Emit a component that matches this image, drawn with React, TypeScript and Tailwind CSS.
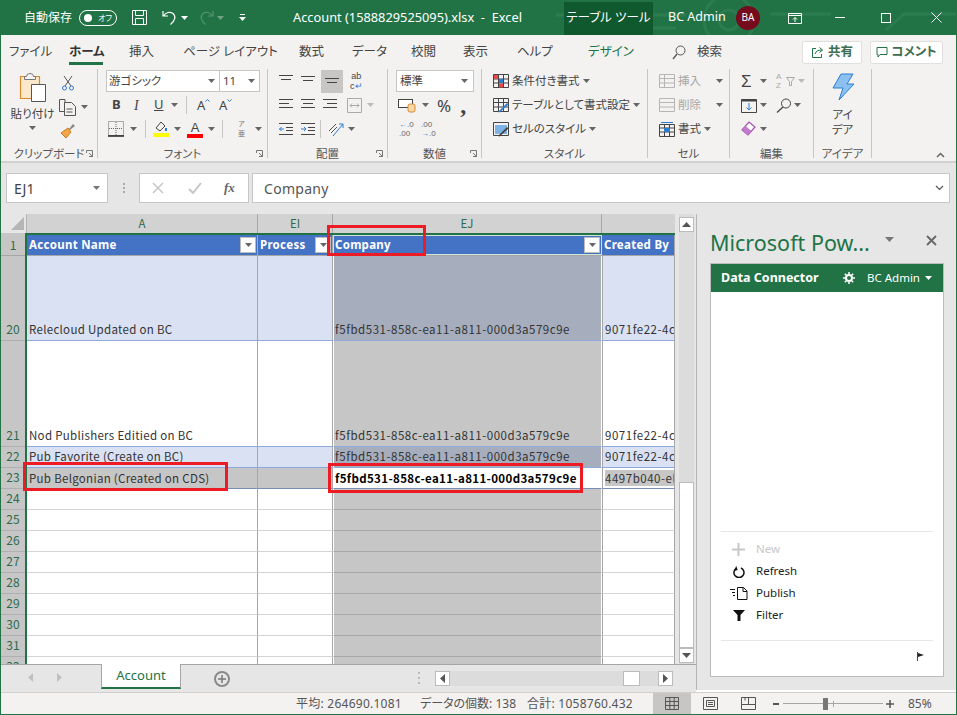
import React from "react";

const CJK = "font-['Noto_Sans','Noto_Sans_CJK_JP',sans-serif] [font-feature-settings:'palt']";

function Caret({ color = "#666666", className = "" }: { color?: string; className?: string }) {
  return (
    <svg width="7" height="4" viewBox="0 0 7 4" className={className}>
      <path d="M0 0h7L3.5 4z" fill={color} />
    </svg>
  );
}

// icon helper: crisp strokes on a pixel viewbox
function Ico({ w = 16, h = 16, children }: { w?: number; h?: number; children: React.ReactNode }) {
  return (
    <svg width={w} height={h} viewBox={`0 0 ${w} ${h}`} fill="none" className="shrink-0">
      {children}
    </svg>
  );
}

function AlignIcon({ rows }: { rows: [number, number][] }) {
  return (
    <Ico w={16} h={14}>
      {rows.map(([x, w], i) => (
        <rect key={i} x={x} y={1 + i * 4} width={w} height="1" fill="#444444" />
      ))}
    </Ico>
  );
}

function Tab({ label, className = "" }: { label: string; className?: string }) {
  return <span className={`whitespace-nowrap ${className}`}>{label}</span>;
}

function TitleBar() {
  return (
    <div className="relative flex h-[35px] shrink-0 items-center overflow-hidden bg-[#217346] text-white">
      <svg width="400" height="35" viewBox="0 0 400 35" fill="none" stroke="#2c7c50" strokeWidth="3" className="absolute right-0 top-0">
        <circle cx="173" cy="20" r="25" />
        <circle cx="173" cy="20" r="10" />
        <path d="M0 15h130M215 14h60M330 30l18-16h52M60 28h60" />
      </svg>
      <span className="relative ml-[23px] text-[12px]">自動保存</span>
      <div className="relative ml-[7px] flex h-[16px] w-[38px] items-center rounded-full border border-white pl-[4px]">
        <span className="h-[8px] w-[8px] rounded-full bg-white" />
        <span className="ml-[6px] text-[8px] leading-none">オフ</span>
      </div>
      <div className="relative ml-[14px]">
        <Ico w={17} h={17}>
          <path d="M1.5 1.5h14v14h-14zM4.5 1.5v5h8v-5M4.5 15.5v-6h8v6" stroke="#fff" />
        </Ico>
      </div>
      <div className="relative ml-[13px]">
        <Ico w={17} h={17}>
          <path d="M2 2v5h5M2.5 7C5 3 9 2.500 12 4.500c3 2.500 2.500 7-2.500 11" stroke="#fff" strokeWidth="1.200" />
        </Ico>
      </div>
      <Caret color="#ffffff" className="relative ml-[3px]" />
      <div className="relative ml-[10px] opacity-40 [transform:scaleX(-1)]">
        <Ico w={17} h={17}>
          <path d="M2 2v5h5M2.500 7C5 3 9 2.500 12 4.500c3 2.500 2.500 7-2.500 11" stroke="#9cc3ad" strokeWidth="1.200" />
        </Ico>
      </div>
      <Caret color="#6fa386" className="relative ml-[2px]" />
      <div className="relative ml-[15px] flex flex-col items-center gap-[2px]">
        <span className="h-px w-[5px] bg-white" />
        <Caret color="#ffffff" />
      </div>
      <span className="relative ml-[47px] w-[271px] whitespace-pre text-[12.8px]">Account (1588829525095).xlsx  -  Excel</span>
      <div className="relative mt-[2px] flex h-[33px] w-[89px] items-center justify-center bg-[#10592f] text-[12.5px]">テーブル ツール</div>
      <span className="relative ml-[15px] w-[68px] text-[12.5px]">BC Admin</span>
      <div className="relative flex h-[24px] w-[24px] items-center justify-center rounded-full bg-[#750b1c] text-[10px]">BA</div>
      <div className="relative ml-[28px]">
        <Ico w={14} h={12}>
          <path d="M.5 1.500h13v10H.5zM.5 3.500h13M7 10V5.500M5 7.500l2-2 2 2" stroke="#fff" />
        </Ico>
      </div>
      <span className="relative ml-[33px] h-px w-[10px] bg-white" />
      <span className="relative ml-[36px] h-[10px] w-[10px] border border-white" />
      <div className="relative ml-[40px]">
        <Ico w={11} h={11}>
          <path d="M.5.500l10 10M10.500.500l-10 10" stroke="#fff" />
        </Ico>
      </div>
    </div>
  );
}

function TabRow() {
  return (
    <div className="flex h-[34px] shrink-0 items-center bg-[#f3f2f1] text-[12.5px] text-[#444444]">
      <Tab label="ファイル" className="ml-[8px] w-[60px]" />
      <div className="relative w-[60px]">
        <span className="font-bold text-[#333333]">ホーム</span>
        <span className="absolute left-0 top-[19px] h-[3px] w-[34px] bg-[#217346]" />
      </div>
      <Tab label="挿入" className="w-[54px]" />
      <Tab label="ページ レイアウト" className="w-[116px]" />
      <Tab label="数式" className="w-[53px]" />
      <Tab label="データ" className="w-[59px]" />
      <Tab label="校閲" className="w-[52px]" />
      <Tab label="表示" className="w-[54px]" />
      <Tab label="ヘルプ" className="w-[71px]" />
      <Tab label="デザイン" className="w-[84px] text-[#217346]" />
      <div className="w-[25px]">
        <Ico w={14} h={15}>
          <circle cx="8.500" cy="5.500" r="4.500" stroke="#555" />
          <path d="M5 9l-4 5" stroke="#555" strokeWidth="1.300" />
        </Ico>
      </div>
      <Tab label="検索" className="w-[105px]" />
      <div className="flex h-[23px] w-[60px] items-center justify-center gap-[4px] rounded-[2px] border border-[#e1dfdd] bg-white font-bold text-[#217346]">
        <Ico w={13} h={13}>
          <path d="M5 2.500H1.500v9h9V8M4 8c1-3 3-4 7-4M8.500 1.500L11.500 4 8.500 6.500" stroke="#217346" />
        </Ico>
        <span className="text-[#3f6d52]">共有</span>
      </div>
      <div className="ml-[8px] flex h-[23px] w-[73px] items-center justify-center gap-[3px] rounded-[2px] border border-[#e1dfdd] bg-white font-bold">
        <Ico w={12} h={12}>
          <path d="M1 1.500h10v7H4L2 11V8.500H1z" stroke="#217346" />
        </Ico>
        <span className="text-[#3f6d52]">コメント</span>
      </div>
    </div>
  );
}

function Group({ width, label, children }: { width: number; label: string; children: React.ReactNode }) {
  return (
    <div className="relative flex h-[89px] shrink-0 flex-col border-r border-[#c8c6c4]" style={{ width }}>
      <div className="min-h-0 flex-1">{children}</div>
      <div className="-mb-[4px] pb-[1px] text-center text-[11.5px] leading-[15px] text-[#555555]">{label}</div>
    </div>
  );
}

function Launcher() {
  return (
    <svg width="7" height="7" viewBox="0 0 7 7" fill="none" className="absolute bottom-[1px] right-[4px]">
      <path d="M.5 3V.500H6.500V6.500H3M3 3l3 3M4 6.500h2.500V4" stroke="#777" />
    </svg>
  );
}

function Row({ className = "", children }: { className?: string; children: React.ReactNode }) {
  return <div className={`flex h-[24px] items-center ${className}`}>{children}</div>;
}

function Sep() {
  return <span className="h-[18px] w-px bg-[#c8c6c4]" />;
}

function GrowA({ down }: { down?: boolean }) {
  return (
    <span className="flex w-[22px] items-start">
      <span className="text-[13px] leading-[16px]">A</span>
      <svg width="5" height="3" viewBox="0 0 5 3" fill="none" className="mt-[2px]">
        <path d={down ? "M.5.500l2 2 2-2" : "M.5 2.500l2-2 2 2"} stroke="#2b7cd3" />
      </svg>
    </span>
  );
}

function Ribbon() {
  return (
    <div className="flex h-[94px] shrink-0 border-b-2 border-[#d2d0ce] bg-[#f3f2f1] pb-[3px] text-[#444444]">
      <Group width={97} label="クリップボード">
        <Launcher />
        <div className="flex">
          <div className="ml-[10px] flex w-[43px] flex-col items-center pt-[4px]">
            <Ico w={28} h={30}>
              <path d="M1.500 3.500h19v22h-19z" fill="#fbe7c9" stroke="#d98a2b" strokeWidth="1.200" />
              <path d="M7.500 3.500a3.500 3 0 017 0h2v3h-11v-3z" fill="#f5f5f5" stroke="#777" />
              <path d="M12.500 11.500h14v17h-14z" fill="#fff" stroke="#555" />
            </Ico>
            <span className="mt-[3px] whitespace-nowrap text-[11.5px] leading-[16px]">貼り付け</span>
            <Caret className="mt-[4px]" />
          </div>
          <div className="ml-[5px] flex flex-col">
            <Row className="h-[23px] pl-[3px] pt-[4px]">
              <Ico w={12} h={16}>
                <path d="M2 1l7 10M10 1L3 11" stroke="#555" />
                <circle cx="2.500" cy="13" r="2" stroke="#2b7cd3" />
                <circle cx="9.500" cy="13" r="2" stroke="#2b7cd3" />
              </Ico>
            </Row>
            <Row className="h-[24px] pt-[4px]">
              <Ico w={18} h={17}>
                <path d="M6 3.500V.500H.500v12H5M5.500 3.500h7l4 4v9h-11zM7.500 10h6M7.500 13h6" stroke="#555" />
              </Ico>
              <Caret className="ml-[4px]" />
            </Row>
            <Row className="h-[24px] pl-[1px] pt-[4px]">
              <Ico w={16} h={16}>
                <path d="M9 6l4-5 2 2-5 4z" fill="#888" />
                <path d="M8 5l3 4-5 6-5-5z" fill="#f3a444" stroke="#c8791e" />
              </Ico>
            </Row>
          </div>
        </div>
      </Group>

      <Group width={170} label="フォント">
        <Launcher />
        <div className="flex h-[23px] pl-[8px] pt-[1px]">
          <div className="flex h-[22px] w-[114px] items-center justify-between border border-[#c8c6c4] bg-white px-[2px] text-[11.5px]">
            <span>游ゴシック</span>
            <Caret className="mr-[2px]" />
          </div>
          <div className="flex h-[22px] w-[40px] items-center justify-between border border-l-0 border-[#c8c6c4] bg-white pl-[3px] pr-[4px] text-[11.5px]">
            <span>11</span>
            <Caret />
          </div>
        </div>
        <Row className="mt-[1px] pl-[14px]">
          <span className="w-[22px] text-[13px] font-bold">B</span>
          <span className="w-[20px] font-['Liberation_Serif',serif] text-[14px] italic">I</span>
          <span className="w-[17px] text-[13px] underline">U</span>
          <Caret />
          <span className="ml-[8px] flex"><Sep /></span>
          <span className="ml-[10px] flex"><GrowA /><GrowA down /></span>
        </Row>
        <Row className="pl-[10px]">
          <Ico w={16} h={16}>
            <path d="M.500.500h15v14H.500z" stroke="#666" strokeDasharray="1 1" />
            <path d="M8 1v13M1 7.500h14" stroke="#666" strokeDasharray="1 1" />
            <path d="M0 15h16" stroke="#222" strokeWidth="1.500" />
          </Ico>
          <Caret className="ml-[6px]" />
          <span className="ml-[8px] flex"><Sep /></span>
          <div className="ml-[7px] flex flex-col items-center">
            <Ico w={16} h={12}>
              <path d="M3 7l5-6 4 4-5 5z" stroke="#444" />
              <path d="M13 7v3" stroke="#2b7cd3" strokeWidth="2" />
            </Ico>
            <span className="h-[4px] w-[16px] bg-[#ffff00]" />
          </div>
          <Caret className="ml-[5px]" />
          <div className="ml-[6px] flex flex-col items-center">
            <span className="font-['Liberation_Sans',sans-serif] text-[13px] leading-[13px]">A</span>
            <span className="h-[4px] w-[16px] bg-[#ff0000]" />
          </div>
          <Caret className="ml-[5px]" />
          <span className="ml-[7px] flex"><Sep /></span>
          <span className="ml-[11px] w-[15px] text-center text-[7px] leading-[10px] text-[#777]">ア<br />亜</span>
          <Caret className="ml-[6px]" />
        </Row>
      </Group>

      <Group width={120} label="配置">
        <Launcher />
        <div className="flex h-[24px] items-center pl-[10px]">
          <span className="w-[22px]"><AlignIcon rows={[[1, 14], [3, 10]]} /></span>
          <span className="w-[22px]"><div className="pt-[2px]"><AlignIcon rows={[[1, 14], [3, 10]]} /></div></span>
          <span className="-ml-[1px] flex h-[23px] w-[22px] items-center justify-center bg-[#c8c6c4]"><div className="pt-[5px]"><AlignIcon rows={[[1, 14], [3, 10]]} /></div></span>
          <span className="ml-[7px] text-center font-['Liberation_Sans',sans-serif] text-[9px] leading-[10px] text-[#444]">ab<br />c<span className="text-[#2b7cd3]">↵</span></span>
        </div>
        <Row className="pl-[10px]">
          <span className="w-[22px]"><AlignIcon rows={[[1, 14], [1, 10], [1, 14]]} /></span>
          <span className="w-[22px]"><AlignIcon rows={[[1, 14], [3, 10], [1, 14]]} /></span>
          <span className="w-[22px]"><AlignIcon rows={[[1, 14], [5, 10], [1, 14]]} /></span>
          <span className="ml-[3px]">
            <Ico w={15} h={15}>
              <path d="M.500.500h14v14H.500z" stroke="#aaa" />
              <path d="M3 7.500h9M3 7.500l2-2M3 7.500l2 2M12 7.500l-2-2M12 7.500l-2 2" stroke="#aaa" />
            </Ico>
          </span>
          <Caret color="#bbbbbb" className="ml-[5px]" />
        </Row>
        <Row className="pl-[10px]">
          <span className="w-[22px]">
            <Ico w={16} h={14}>
              <path d="M1 1.500h14M8 5.500h7M8 8.500h7M1 12.500h14" stroke="#444" />
              <path d="M6 7H1.500M3.500 5L1.500 7l2 2" stroke="#2b7cd3" />
            </Ico>
          </span>
          <span className="w-[20px]">
            <Ico w={16} h={14}>
              <path d="M1 1.500h14M8 5.500h7M8 8.500h7M1 12.500h14" stroke="#444" />
              <path d="M1 7h5M4 5l2 2-2 2" stroke="#2b7cd3" />
            </Ico>
          </span>
          <Sep />
          <span className="ml-[7px]">
            <Ico w={17} h={15}>
              <path d="M1 9l7-7M3 11l6-6" stroke="#555" />
              <path d="M5 14L15 2M11 2h4v4" stroke="#2b7cd3" />
            </Ico>
          </span>
          <Caret className="ml-[3px]" />
        </Row>
      </Group>

      <Group width={94} label="数値">
        <Launcher />
        <div className="flex h-[24px] pl-[8px] pt-[1px]">
          <div className="flex h-[22px] w-[78px] items-center justify-between border border-[#c8c6c4] bg-white px-[3px] text-[11.5px]">
            <span>標準</span>
            <Caret className="mr-[2px]" />
          </div>
        </div>
        <Row className="pl-[10px]">
          <Ico w={18} h={16}>
            <rect x=".5" y="2.500" width="14" height="8" fill="#fff" stroke="#444" />
            <rect x="10" y="7" width="7" height="8" rx="2" fill="#f9d9a8" stroke="#d98a2b" />
          </Ico>
          <Caret className="ml-[6px]" />
          <span className="ml-[8px] text-[17px] leading-none">%</span>
          <span className="ml-[9px] font-['Liberation_Serif',serif] text-[24px] font-bold leading-[14px]">,</span>
        </Row>
        <Row className="pl-[11px] font-['Liberation_Sans',sans-serif] text-[8px] leading-[9.5px] text-[#666]">
          <span className="w-[22px]"><span className="text-[#2b7cd3]">←</span>.0<br />.00</span>
          <span>.00<br /><span className="text-[#2b7cd3]">→</span>.0</span>
        </Row>
      </Group>

      <Group width={166} label="スタイル">
        <div className="flex flex-col pl-[11px] text-[11.5px]">
          <Row>
            <Ico w={16} h={15}>
              <path d="M.500.500h15v13H.500zM5.500.500v13M10.500.500v13M.500 5h15M.500 9h15" stroke="#444" />
              <rect x="1" y="1" width="4" height="4" fill="#e8474b" />
              <rect x="6" y="5" width="4" height="4" fill="#2b7cd3" />
              <rect x="6" y="9.500" width="4" height="4" fill="#e8474b" />
            </Ico>
            <span className="ml-[3px] whitespace-nowrap">条件付き書式</span>
            <Caret className="ml-[3px]" />
          </Row>
          <Row>
            <Ico w={16} h={15}>
              <path d="M.500.500h15v13H.500zM.500 4.500h15M5.500.500v13M10.500.500v13M.500 9h15" stroke="#444" />
              <path d="M5 14l9-9 1.500 1.500-9 8z" fill="#2b7cd3" />
            </Ico>
            <span className="ml-[3px] whitespace-nowrap">テーブルとして書式設定</span>
            <Caret className="ml-[3px]" />
          </Row>
          <Row>
            <Ico w={16} h={15}>
              <path d="M.500.500h15v13H.500z" stroke="#444" />
              <rect x="2" y="3" width="12" height="9" fill="#7fb2e5" />
              <path d="M5 14l9-9 1.500 1.500-9 8z" fill="#444" />
            </Ico>
            <span className="ml-[3px] whitespace-nowrap">セルのスタイル</span>
            <Caret className="ml-[3px]" />
          </Row>
        </div>
      </Group>

      <Group width={82} label="セル">
        <div className="flex flex-col pl-[11px] text-[11.5px]">
          <Row className="text-[#a6a6a6]">
            <Ico w={16} h={14}>
              <path d="M.500.500h15v13H.500zM5.500.500v13M.500 4.500h15M.500 9h15" stroke="#b5b5b5" />
            </Ico>
            <span className="ml-[3px] w-[38px]">挿入</span>
            <Caret />
          </Row>
          <Row className="text-[#a6a6a6]">
            <Ico w={16} h={14}>
              <path d="M.500.500h15v13H.500zM.500 4.500h15M.500 9h15" stroke="#b5b5b5" />
            </Ico>
            <span className="ml-[3px] w-[38px]">削除</span>
            <Caret />
          </Row>
          <Row>
            <Ico w={16} h={15}>
              <path d="M.500 2.500h15v12H.500zM.500 6h15M.500 10h15M5.500 2.500v12M10.500 2.500v12" stroke="#444" />
              <rect x="5" y="6" width="6" height="4" fill="#2b7cd3" />
              <path d="M2 .500h12" stroke="#2b7cd3" />
            </Ico>
            <span className="ml-[3px] mr-[3px]">書式</span>
            <Caret />
          </Row>
        </div>
      </Group>

      <Group width={84} label="編集">
        <div className="flex flex-col pl-[11px]">
          <Row>
            <span className="w-[15px] font-['Liberation_Sans',sans-serif] text-[17px] leading-none">Σ</span>
            <Caret className="ml-[4px]" />
            <span className="ml-[9px] w-[10px] font-['Liberation_Sans',sans-serif] text-[8px] leading-[9px] text-[#aaa]">A<br />Z</span>
            <Ico w={9} h={9}>
              <path d="M.500.500h8L5.500 4.500v4h-2v-4z" stroke="#aaa" />
            </Ico>
            <Caret color="#bbbbbb" className="ml-[3px]" />
          </Row>
          <Row>
            <Ico w={16} h={15}>
              <path d="M.500 1.500h15v13H.500z" stroke="#444" />
              <path d="M.500 1.500h15v2H.500z" fill="#444" />
              <path d="M8 5v7M5.500 9.500L8 12l2.500-2.500" stroke="#2b7cd3" />
            </Ico>
            <Caret className="ml-[3px]" />
            <span className="ml-[9px]">
              <Ico w={16} h={15}>
                <circle cx="10" cy="5.500" r="4.500" stroke="#444" />
                <path d="M7 9l-6 5.500" stroke="#444" strokeWidth="1.300" />
              </Ico>
            </span>
            <Caret className="ml-[2px]" />
          </Row>
          <Row>
            <Ico w={16} h={16}>
              <path d="M1 9l7-8 6 5-7 8z" fill="#fff" stroke="#a24bb0" strokeWidth="1.200" />
              <path d="M1 9l3.500-4 6 5-3.500 4z" fill="#c27bce" />
            </Ico>
            <Caret className="ml-[3px]" />
          </Row>
        </div>
      </Group>

      <Group width={58} label="アイデア">
        <div className="flex flex-col items-center pt-[4px]">
          <Ico w={22} h={28}>
            <path d="M9 1h12l-6 10h7L7 27l4-12H1z" fill="#8cc0f0" stroke="#2b7cd3" />
          </Ico>
          <span className="mt-[6px] text-center text-[11.5px] leading-[15px]">アイ<br />デア</span>
        </div>
      </Group>

      <div className="flex flex-1 items-end justify-end pr-[11px]">
        <svg width="9" height="6" viewBox="0 0 9 6" fill="none">
          <path d="M1 5l3.500-3.500L8 5" stroke="#666" strokeWidth="1.500" />
        </svg>
      </div>
    </div>
  );
}

function FormulaBar() {
  return (
    <div className="flex h-[51px] shrink-0 items-start bg-[#e6e6e6] pl-[5px] pr-[6px] pt-[10px]">
      <div className="flex h-[30px] w-[102px] items-center justify-between border border-[#c8c6c4] bg-white pl-[7px] pr-[7px] text-[14px] text-[#444]">
        <span>EJ1</span>
        <Caret color="#777777" />
      </div>
      <div className="flex h-[30px] w-[31px] flex-col items-center justify-center gap-[2px]">
        <span className="h-[2px] w-[2px] bg-[#aaa]" />
        <span className="h-[2px] w-[2px] bg-[#aaa]" />
        <span className="h-[2px] w-[2px] bg-[#aaa]" />
      </div>
      <div className="flex h-[30px] w-[110px] items-center border border-[#c8c6c4] bg-white pl-[12px]">
        <Ico w={12} h={12}>
          <path d="M1 1l10 10M11 1L1 11" stroke="#c8c6c4" strokeWidth="1.500" />
        </Ico>
        <span className="ml-[24px]">
          <Ico w={14} h={12}>
            <path d="M1 7l4 4 8-10" stroke="#c8c6c4" strokeWidth="2" />
          </Ico>
        </span>
        <span className="ml-[22px] font-['Liberation_Serif',serif] text-[13px] font-bold italic text-[#666]">fx</span>
      </div>
      <div className="ml-[3px] flex h-[30px] flex-1 items-center justify-between border border-[#c8c6c4] bg-white pl-[11px] pr-[5px] text-[14px] text-[#555]">
        <span className="tracking-[0.3px]">Company</span>
        <svg width="9" height="6" viewBox="0 0 9 6" fill="none">
          <path d="M1 1l3.500 3.500L8 1" stroke="#555" strokeWidth="1.200" />
        </svg>
      </div>
    </div>
  );
}

type RowData = { n: number; h: number; a?: string; co?: string; cr?: string; kind: "band" | "plain" | "sel" | "empty" };

const rows: RowData[] = [
  { n: 20, h: 85, kind: "band", a: "Relecloud Updated on BC", co: "f5fbd531-858c-ea11-a811-000d3a579c9e", cr: "9071fe22-4c" },
  { n: 21, h: 106, kind: "plain", a: "Nod Publishers Editied on BC", co: "f5fbd531-858c-ea11-a811-000d3a579c9e", cr: "9071fe22-4c" },
  { n: 22, h: 21, kind: "band", a: "Pub Favorite (Create on BC)", co: "f5fbd531-858c-ea11-a811-000d3a579c9e", cr: "9071fe22-4c" },
  { n: 23, h: 21, kind: "sel", a: "Pub Belgonian (Created on CDS)", co: "f5fbd531-858c-ea11-a811-000d3a579c9e", cr: "4497b040-el" },
  ...[24, 25, 26, 27, 28, 29, 30, 31, 32].map((n) => ({ n, h: 21, kind: "empty" as const })),
];

const cellText = "overflow-hidden whitespace-nowrap pl-[2px] pb-[3px] font-['Noto_Sans_CJK_JP',sans-serif] text-[11.5px] leading-[16px] text-[#333]";

function FilterBtn() {
  return (
    <span className="ml-auto mr-[1px] flex h-[16px] w-[16px] shrink-0 items-center justify-center border border-[#bbb] bg-white">
      <Caret color="#666666" />
    </span>
  );
}

function HeaderCell({ width, label, filter, active, border }: { width: string; label: string; filter?: boolean; active?: boolean; border: string }) {
  return (
    <div className={`flex h-full items-center overflow-hidden border-r bg-[#4472c4] ${width} ${border} ${active ? "outline outline-1 -outline-offset-1 outline-[#cfe3d6]" : ""}`}>
      <span className="whitespace-nowrap pl-[2px] font-['Noto_Sans',sans-serif] text-[11.5px] font-bold tracking-[0.28px] text-white">{label}</span>
      {filter && <FilterBtn />}
    </div>
  );
}

function DataRow({ r }: { r: RowData }) {
  const band = r.kind === "band";
  const sel = r.kind === "sel";
  const aBg = sel ? "bg-[#c6c6c6]" : band ? "bg-[#d9e1f2]" : "bg-white";
  const ejBg = sel ? "bg-white" : band ? "bg-[#a6adbd]" : "bg-[#c6c6c6]";
  const line = r.kind === "empty" ? "border-b-[#d4d4d4]" : sel ? "border-b-[#7a8db5]" : "border-b-[#8ea9db]";
  const ejLine = r.kind === "empty" ? "border-b-[#a8a8a8]" : sel ? "border-b-[#7a8db5]" : "border-b-[#8ea9db]";
  return (
    <div className="flex shrink-0" style={{ height: r.h }}>
      <div className={`flex w-[231px] items-end border-b border-r border-r-[#a6a6a6] ${aBg} ${line}`}>
        {r.a && <span className={`${cellText} tracking-[0.3px] ${sel ? "!pb-[2px]" : ""}`}>{r.a}</span>}
      </div>
      <div className={`w-[75px] border-b border-r border-r-[#a6a6a6] ${aBg} ${line}`} />
      <div className={`flex w-[269px] items-end border-b border-r border-l border-l-white border-r-white ${ejBg} ${ejLine}`}>
        {r.co && (
          <span className={`${cellText} !pl-[1px] ${sel ? "!pb-[2px] font-bold tracking-[0.36px] text-black" : "tracking-[0.53px]"}`}>{r.co}</span>
        )}
      </div>
      <div className={`flex flex-1 items-end overflow-hidden border-b border-r border-l border-l-[#a6a6a6] border-r-[#a6a6a6] ${band ? "bg-[#d9e1f2]" : "bg-white"} ${line}`}>
        {r.cr && (
          <span className={`${cellText} min-w-0 tracking-[0.53px] ${sel ? "!pb-[2px]" : ""}`}>
            <span className={sel ? "bg-[#c6c6c6]" : ""}>{r.cr}</span>
          </span>
        )}
      </div>
    </div>
  );
}

function ScrollArrow({ dir }: { dir: "up" | "down" | "left" | "right" }) {
  const d = { up: "M0 5L4.500 0 9 5z", down: "M0 0h9L4.500 5z", left: "M5 0v9L0 4.500z", right: "M0 0v9l5-4.500z" }[dir];
  const vertical = dir === "up" || dir === "down";
  return (
    <svg width={vertical ? 9 : 5} height={vertical ? 5 : 9} viewBox={vertical ? "0 0 9 5" : "0 0 5 9"}>
      <path d={d} fill="#555" />
    </svg>
  );
}

function Sheet() {
  return (
    <div className="relative flex h-[450px] shrink-0 overflow-hidden bg-[#e6e6e6]">
      <div className="flex w-[674px] shrink-0 flex-col overflow-hidden">
        {/* column letters */}
        <div className="flex h-[19px] shrink-0 bg-[#d2d2d2] text-center font-['Noto_Sans_CJK_JP',sans-serif] text-[11.5px] leading-[18px] text-[#2d6a4a]">
          <div className="flex w-[26px] items-end justify-end border-r border-[#b5b5b5] bg-[#e6e6e6] pb-[3px] pr-[2px]">
            <svg width="13" height="13" viewBox="0 0 13 13"><path d="M13 0v13H0z" fill="#b5b5b5" /></svg>
          </div>
          <div className="w-[231px] border-r border-[#a6a6a6]">A</div>
          <div className="w-[75px] border-r border-[#a6a6a6]">EI</div>
          <div className="w-[269px] border-r border-[#a6a6a6]">EJ</div>
          <div className="flex-1" />
        </div>
        <div className="flex min-h-0 flex-1">
          {/* row numbers */}
          <div className="flex w-[24px] shrink-0 flex-col bg-[#c6c6c6] pt-[2px] text-center font-['Noto_Sans_CJK_JP',sans-serif] text-[12px] text-[#2d6a4a]">
            <div className="flex h-[21px] shrink-0 items-end justify-center border-b border-[#a6a6a6] pb-[1px] leading-[18px]">1</div>
            {rows.map((r) => (
              <div key={r.n} className="flex shrink-0 items-end justify-center border-b border-[#b0b0b0] pb-[2px] leading-[18px]" style={{ height: r.h }}>
                {r.n}
              </div>
            ))}
          </div>
          {/* cells */}
          <div className="min-w-0 flex-1 border-l-2 border-t-2 border-[#217346]">
            <div className="flex h-[21px] shrink-0 border-b border-b-[#a6a6a6]">
              <HeaderCell width="w-[231px]" label="Account Name" filter border="border-r-[#a6a6a6]" />
              <HeaderCell width="w-[75px]" label="Process" filter border="border-r-[#a6a6a6]" />
              <HeaderCell width="w-[269px]" label="Company" filter active border="border-r-white" />
              <div className="flex-1"><HeaderCell width="w-full" label="Created By" border="border-r-[#a6a6a6]" /></div>
            </div>
            {rows.map((r) => (
              <DataRow key={r.n} r={r} />
            ))}
          </div>
        </div>
      </div>

      {/* vertical scrollbar */}
      <div className="ml-[4px] flex w-[15px] shrink-0 flex-col bg-[#dcdcdc]">
        <div className="mt-[3px] flex h-[15px] items-center justify-center border border-[#bbb] bg-white"><ScrollArrow dir="up" /></div>
        <div className="h-[250px]" />
        <div className="h-[166px] border border-[#bbb] bg-white" />
        <div className="flex h-[15px] items-center justify-center border border-[#bbb] bg-white"><ScrollArrow dir="down" /></div>
      </div>

      {/* red annotation boxes */}
      <div className="pointer-events-none absolute left-[326px] top-[11px] h-[31px] w-[99px] border-[3px] border-[#ed1c24]" />
      <div className="pointer-events-none absolute left-[22px] top-[248px] h-[29px] w-[205px] border-[3px] border-[#ed1c24]" />
      <div className="pointer-events-none absolute left-[327px] top-[249px] h-[30px] w-[255px] border-[3px] border-[#ed1c24]" />
    </div>
  );
}

function SheetTabs() {
  return (
    <div className="flex h-[28px] shrink-0 items-start border-t border-[#a6a6a6] bg-[#e6e6e6]">
      <div className="flex h-[24px] w-[100px] items-center pl-[27px]">
        <svg width="5" height="9" viewBox="0 0 5 9"><path d="M5 0v9L0 4.500z" fill="#c0c0c0" /></svg>
        <svg width="5" height="9" viewBox="0 0 5 9" className="ml-[24px]"><path d="M0 0v9l5-4.500z" fill="#c0c0c0" /></svg>
      </div>
      <div className="-mt-px flex h-[25px] w-[80px] items-center justify-center border-x border-[#a6a6a6] border-b-2 border-b-[#217346] bg-white text-[13px] text-[#217346]">
        Account
      </div>
      <div className="ml-[33px] mt-[6px] flex h-[16px] w-[16px] items-center justify-center rounded-full border-2 border-[#8a8a8a]">
        <svg width="8" height="8" viewBox="0 0 8 8"><path d="M4 0v8M0 4h8" stroke="#777" strokeWidth="1.500" /></svg>
      </div>
      <div className="ml-[188px] mt-[7px] flex flex-col gap-[3px]">
        <span className="h-[2px] w-[2px] bg-[#bbb]" />
        <span className="h-[2px] w-[2px] bg-[#bbb]" />
        <span className="h-[2px] w-[2px] bg-[#bbb]" />
      </div>
      <div className="ml-[15px] mt-[6px] flex h-[15px] w-[238px] items-center bg-[#dcdcdc]">
        <span className="flex h-[15px] w-[15px] items-center justify-center border border-[#bbb] bg-white"><ScrollArrow dir="left" /></span>
        <span className="ml-[173px] h-[15px] w-[17px] border border-[#bbb] bg-white" />
        <span className="ml-auto flex h-[15px] w-[15px] items-center justify-center border border-[#bbb] bg-white"><ScrollArrow dir="right" /></span>
      </div>
    </div>
  );
}

function PaneAction({ label, disabled, children }: { label: string; disabled?: boolean; children: React.ReactNode }) {
  return (
    <div className={`flex h-[22px] items-center text-[11.5px] ${disabled ? "text-[#c8c8c8]" : "text-[#222]"}`}>
      <span className="flex w-[35px] justify-center">{children}</span>
      <span>{label}</span>
    </div>
  );
}

function TaskPane() {
  return (
    <div className="flex h-[476px] w-[260px] shrink-0 flex-col border-l border-[#b5b5b5] bg-[#e6e6e6]">
      <div className="flex h-[49px] shrink-0 items-center pl-[13px] pt-[9px]">
        <span className="whitespace-nowrap text-[21.5px] leading-none text-[#217346]">Microsoft Pow...</span>
        <svg width="9" height="5" viewBox="0 0 9 5" className="ml-[15px] -mt-[7px]"><path d="M0 0h9L4.500 5z" fill="#777" /></svg>
        <span className="ml-[32px] -mt-[6px]">
          <Ico w={11} h={11}>
            <path d="M1 1l9 9M10 1l-9 9" stroke="#666" strokeWidth="1.800" />
          </Ico>
        </span>
      </div>
      <div className="ml-[13px] flex h-[414px] w-[234px] flex-col border border-[#bbb] bg-white">
        <div className="flex h-[28px] shrink-0 items-center bg-[#217346] pl-[10px] text-white">
          <span className="w-[122px] text-[12.5px] font-bold leading-none">Data Connector</span>
          <svg width="12" height="12" viewBox="0 0 12 12">
            <circle cx="6" cy="6" r="3" fill="none" stroke="#fff" strokeWidth="2" />
            <path d="M6 0v2M6 10v2M0 6h2M10 6h2M1.800 1.800l1.500 1.500M8.700 8.700l1.500 1.500M10.200 1.800L8.700 3.300M3.300 8.700l-1.500 1.500" stroke="#fff" strokeWidth="1.500" />
          </svg>
          <span className="ml-[12px] text-[11.5px]">BC Admin</span>
          <Caret color="#ffffff" className="ml-[5px]" />
        </div>
        <div className="mx-[10px] mt-[239px] border-t border-[#e6e6e6] pb-[6px]" />
        <div className="flex flex-col pl-[10px]">
          <PaneAction label="New" disabled>
            <svg width="13" height="13" viewBox="0 0 13 13"><path d="M6.500 0v13M0 6.500h13" stroke="#c8c8c8" strokeWidth="2" /></svg>
          </PaneAction>
          <PaneAction label="Refresh">
            <svg width="12" height="13" viewBox="0 0 12 13" fill="none">
              <path d="M3.500 3.200A5 5 0 1 0 8 3" stroke="#111" strokeWidth="1.500" />
              <path d="M4 .500v4.500h-3.500z" fill="#111" transform="rotate(-20 4 3)" />
            </svg>
          </PaneAction>
          <PaneAction label="Publish">
            <svg width="18" height="13" viewBox="0 0 18 13" fill="none">
              <path d="M7.500.500h6l3.500 3.500v8.500H7.500zM13 .500V4.500h4M0 2.500h5M2 5.500h3M3 8.500h2" stroke="#111" />
            </svg>
          </PaneAction>
          <PaneAction label="Filter">
            <svg width="12" height="11" viewBox="0 0 12 11"><path d="M0 0h12L7.500 5v6h-3V5z" fill="#111" /></svg>
          </PaneAction>
        </div>
        <div className="mx-[10px] mt-[14px] border-t border-[#e6e6e6]" />
        <div className="flex justify-end pr-[19px] pt-[11px]">
          <svg width="7" height="9" viewBox="0 0 7 9">
            <path d="M.500 0v9" stroke="#5c2d91" />
            <path d="M1 1l6 2-6 2z" fill="#222" />
          </svg>
        </div>
      </div>
    </div>
  );
}

function StatusBar() {
  return (
    <div className="flex h-[22px] shrink-0 items-center border-t border-[#d2d0ce] bg-[#f3f2f1] text-[12px] text-[#555]">
      <span className="ml-[295px] w-[124px] whitespace-nowrap tracking-[0.25px]">平均: 264690.1081</span>
      <span className="w-[107px] whitespace-nowrap">データの個数: 138</span>
      <span className="w-[126px] whitespace-nowrap tracking-[0.25px]">合計: 1058760.432</span>
      <span className="flex h-full w-[38px] items-center justify-center bg-[#c8c6c4]">
        <svg width="14" height="13" viewBox="0 0 14 13" fill="none">
          <path d="M.500.500h13v12H.500zM4.800.500v12M9.200.500v12M.500 4.500h13M.500 8.500h13" stroke="#555" />
        </svg>
      </span>
      <span className="ml-[12px]">
        <svg width="15" height="13" viewBox="0 0 15 13" fill="none">
          <path d="M.500.500h14v12H.500zM3.500 3.500h8v6h-8zM5 5.500h5M5 7.500h5" stroke="#555" />
        </svg>
      </span>
      <span className="ml-[23px]">
        <svg width="15" height="13" viewBox="0 0 15 13" fill="none">
          <path d="M.500.500h14v12H.500zM.500 7.500h14M7.500.500v7M4 .500v3" stroke="#555" />
        </svg>
      </span>
      <span className="ml-[17px] h-[2px] w-[6px] bg-[#555]" />
      <div className="relative ml-[4px] flex h-[12px] w-[100px] items-center">
        <span className="h-px w-full bg-[#a6a6a6]" />
        <span className="absolute left-[40px] top-0 h-[12px] w-[5px] bg-[#777]" />
        <span className="absolute left-[50px] top-[3px] h-[6px] w-px bg-[#a6a6a6]" />
      </div>
      <svg width="8" height="8" viewBox="0 0 8 8" className="ml-[3px]"><path d="M4 0v8M0 4h8" stroke="#555" strokeWidth="1.500" /></svg>
      <span className="ml-[14px]">85%</span>
    </div>
  );
}

export default function App() {
  return (
    <div className={`box-border flex h-[715px] w-[957px] flex-col overflow-hidden border-x border-b border-[#217346] ${CJK}`}>
      <TitleBar />
      <TabRow />
      <Ribbon />
      <FormulaBar />
      <div className="flex h-[478px] shrink-0">
        <div className="flex w-[695px] shrink-0 flex-col">
          <Sheet />
          <SheetTabs />
        </div>
        <TaskPane />
      </div>
      <StatusBar />
    </div>
  );
}
